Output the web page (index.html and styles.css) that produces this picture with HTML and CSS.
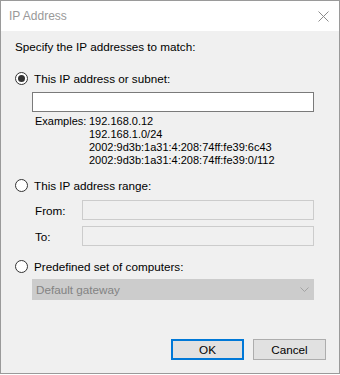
FILE: index.html
```html
<!DOCTYPE html>
<html lang="en">
<head>
  <meta charset="UTF-8" />
  <title>IP Address</title>
  <link rel="stylesheet" href="styles.css">
</head>
<body>
  <div class="window">
    <div class="titlebar">
      <span class="title">IP Address</span>
      <svg class="close" width="11" height="11" viewBox="0 0 11 11">
        <path d="M0.5 0.5 L10.5 10.5 M10.5 0.5 L0.5 10.5" stroke="#8c8c8c" stroke-width="1" fill="none"/>
      </svg>
    </div>

    <div class="content">
      <p class="intro">Specify the IP addresses to match:</p>

      <div class="radio-row first">
        <span class="radio checked"></span>
        <span>This IP address or subnet:</span>
      </div>
      <div class="textbox wide"></div>

      <div class="examples">
        <span class="ex-label">Examples:</span>
        <div class="ex-list">
          <div>192.168.0.12</div>
          <div>192.168.1.0/24</div>
          <div>2002:9d3b:1a31:4:208:74ff:fe39:6c43</div>
          <div>2002:9d3b:1a31:4:208:74ff:fe39:0/112</div>
        </div>
      </div>

      <div class="radio-row second">
        <span class="radio"></span>
        <span>This IP address range:</span>
      </div>
      <div class="range-row from">
        <span class="range-label">From:</span>
        <div class="textbox disabled"></div>
      </div>
      <div class="range-row to">
        <span class="range-label">To:</span>
        <div class="textbox disabled"></div>
      </div>

      <div class="radio-row third">
        <span class="radio"></span>
        <span>Predefined set of computers:</span>
      </div>
      <div class="combo">
        <span>Default gateway</span>
        <svg width="9" height="5" viewBox="0 0 9 5">
          <path d="M0.5 0.5 L4.5 4.5 L8.5 0.5" stroke="#a3a3a3" stroke-width="1" fill="none"/>
        </svg>
      </div>

      <div class="buttons">
        <button class="btn default">OK</button>
        <button class="btn">Cancel</button>
      </div>
    </div>
  </div>
</body>
</html>
```

FILE: styles.css
```css
body {
  margin: 0;
  font-family: "Liberation Sans", Arial, sans-serif;
  font-size: 11.7px;
  color: #000;
}
.window {
  width: 340px;
  height: 374px;
  box-sizing: border-box;
  border: 1px solid #9a9a9a;
  background: #f0f0f0;
}
.titlebar {
  height: 30px;
  background: #fff;
  display: flex;
  align-items: center;
  justify-content: space-between;
  padding: 0 9px 0 8px;
}
.title {
  color: #999;
  font-size: 12px;
}
.close {
  margin-right: 1px;
}
.content {
  padding: 0 0 0 14px;
}
.intro {
  margin: 8px 0 0;
  line-height: 16px;
}
.radio-row {
  display: flex;
  align-items: center;
  gap: 6px;
  height: 13px;
}
.radio-row.first { margin-top: 17px; }
.radio-row.second { margin-top: 12px; }
.radio-row.third { margin-top: 14px; }
.radio {
  width: 13px;
  height: 13px;
  box-sizing: border-box;
  border: 1px solid #333;
  border-radius: 50%;
  background: #fff;
  display: flex;
  align-items: center;
  justify-content: center;
}
.radio.checked::after {
  content: "";
  width: 7px;
  height: 7px;
  border-radius: 50%;
  background: #333;
}
.textbox {
  height: 20px;
  box-sizing: border-box;
  border: 1px solid #7a7a7a;
  background: #fff;
}
.textbox.wide {
  width: 282px;
  margin: 7px 0 0 17px;
}
.textbox.disabled {
  width: 232px;
  border-color: #ccc;
  background: #f0f0f0;
}
.examples {
  display: flex;
  margin: 3px 0 0 20px;
  line-height: 13px;
  font-size: 11px;
}
.ex-label {
  width: 54px;
  flex-shrink: 0;
}
.range-row {
  display: flex;
  align-items: center;
  padding-left: 20px;
}
.range-row.from { margin-top: 8px; }
.range-row.to { margin-top: 6px; }
.range-label {
  width: 47px;
}
.combo {
  width: 282px;
  height: 21px;
  box-sizing: border-box;
  margin: 6px 0 0 17px;
  border: 1px solid #ccc;
  background: #ccc;
  color: #838383;
  display: flex;
  align-items: center;
  justify-content: space-between;
  padding: 0 4px 0 3px;
}
.buttons {
  display: flex;
  justify-content: flex-end;
  gap: 9px;
  margin: 39px 13px 0 0;
}
.btn {
  width: 73px;
  height: 21px;
  box-sizing: border-box;
  border: 1px solid #adadad;
  background: #e1e1e1;
  font-family: inherit;
  font-size: 11.7px;
  color: #000;
  padding: 0;
}
.btn.default {
  border: 2px solid #0078d7;
}
```
